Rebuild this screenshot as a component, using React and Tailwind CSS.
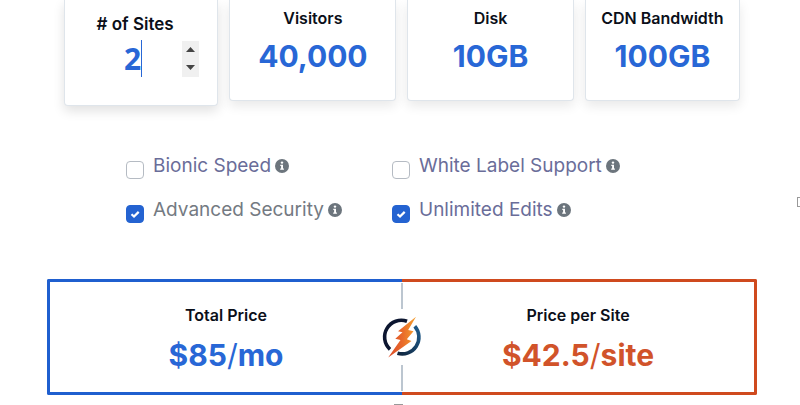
import React, { useState } from 'react';

const stats = [
  { label: 'Visitors', value: '40,000' },
  { label: 'Disk', value: '10GB' },
  { label: 'CDN Bandwidth', value: '100GB' },
];

const addons = [
  { id: 'speed', label: 'Bionic Speed', checked: false, color: 'text-[#6a6d99]' },
  { id: 'support', label: 'White Label Support', checked: false, color: 'text-[#6a6d99]' },
  { id: 'security', label: 'Advanced Security', checked: true, color: 'text-[#747a82]' },
  { id: 'edits', label: 'Unlimited Edits', checked: true, color: 'text-[#6a6d99]' },
];

function InfoIcon() {
  return (
    <svg viewBox="0 0 14 14" className="w-3.5 h-3.5 shrink-0" aria-hidden="true">
      <circle cx="7" cy="7" r="7" fill="#6c757d" />
      <circle cx="7" cy="3.6" r="1.2" fill="#fff" />
      <path d="M5.3 5.8H8v3.8h.9v1.2H5.2V9.6h.9V7h-.8z" fill="#fff" />
    </svg>
  );
}

function BoltLogo() {
  return (
    <svg viewBox="0 0 40 42" className="w-10 h-[42px]" aria-hidden="true">
      <defs>
        <linearGradient id="bolt" x1="0" y1="0" x2="1" y2="0">
          <stop offset="0" stopColor="#dc4b28" />
          <stop offset="0.5" stopColor="#e8692b" />
          <stop offset="1" stopColor="#f5a02c" />
        </linearGradient>
        <linearGradient id="ring" x1="0" y1="1" x2="1" y2="0">
          <stop offset="0" stopColor="#10243c" />
          <stop offset="1" stopColor="#1f5c8c" />
        </linearGradient>
      </defs>
      <path d="M25 5.3A16.7 16.7 0 0 0 8 33.3" fill="none" stroke="#0c1630" strokeWidth="3.6" />
      <path d="M32.800 10.200A16.700 16.700 0 0 1 15.500 37.200" fill="none" stroke="url(#ring)" strokeWidth="3.6" />
      <path d="M34 .8 16 15.300l4.500 1L13.300 22.700l5.200 1.300L6.200 41.500 29.500 25l-4.700-1.800L31.500 15.300l-5.300-1.300z" fill="url(#bolt)" />
    </svg>
  );
}

function StatCard({ label, value }) {
  return (
    <div className="h-[101px] pt-2 text-center bg-white border border-t-0 border-[#dfe5eb] rounded-b shadow-[0_5px_12px_rgba(0,0,0,0.09)]">
      <p className="text-base leading-5 font-semibold text-[#0b0f19]">{label}</p>
      <p className="mt-2 text-3xl leading-10 font-bold text-[#2867d6]">{value}</p>
    </div>
  );
}

function SitesCard({ sites, setSites }) {
  return (
    <div className="h-[106px] pt-[14px] px-[18px] text-center bg-white border border-t-0 border-[#dfe5eb] rounded-b shadow-[0_5px_12px_rgba(0,0,0,0.12)]">
      <label htmlFor="sites" className="block pr-3 text-[17px] leading-5 font-semibold text-[#0b0f19]"># of Sites</label>
      <div className="flex items-center mt-1.5">
        <div className="relative flex-1 min-w-0">
          <input
            id="sites"
            type="text"
            inputMode="numeric"
            value={sites}
            onChange={(e) => setSites(Number(e.target.value) || 0)}
            className="block w-full h-[37px] text-center text-3xl font-bold text-[#2867d6] font-['Noto_Sans',sans-serif] outline-none caret-transparent"
          />
          <span className="absolute top-0 left-1/2 ml-2 w-px h-[37px] bg-[#2867d6]" />
        </div>
        <div className="flex flex-col w-[17px] h-9 bg-[#f0f0f0]">
          <button type="button" aria-label="More sites" onClick={() => setSites(sites + 1)} className="flex-1 flex items-center justify-center">
            <svg viewBox="0 0 9 5" className="w-[9px] h-[5px]"><path d="M0 5 4.500 0 9 5z" fill="#444" /></svg>
          </button>
          <button type="button" aria-label="Fewer sites" onClick={() => setSites(Math.max(1, sites - 1))} className="flex-1 flex items-center justify-center">
            <svg viewBox="0 0 9 5" className="w-[9px] h-[5px]"><path d="M0 0 4.500 5 9 0z" fill="#444" /></svg>
          </button>
        </div>
      </div>
    </div>
  );
}

function Addon({ id, label, checked, color }) {
  return (
    <div className="flex h-11">
      <span className="relative w-[18px] h-[18px] mt-[7px] mr-[9px]">
        <input
          id={id}
          type="checkbox"
          defaultChecked={checked}
          className="peer block w-[18px] h-[18px] appearance-none bg-white border border-[#b5bbc3] rounded checked:bg-[#2463d1] checked:border-[#2463d1]"
        />
        <svg viewBox="0 0 18 18" className="absolute inset-0 hidden peer-checked:block pointer-events-none">
          <path d="m5.500 9.300 2.500 2.300 4.700-4.700" fill="none" stroke="#fff" strokeWidth="2.200" />
        </svg>
      </span>
      <label htmlFor={id} className={`flex items-center gap-1 h-6 text-[19px] leading-6 whitespace-nowrap ${color}`}>
        {label}
        <InfoIcon />
      </label>
    </div>
  );
}

function App() {
  const [sites, setSites] = useState(2);

  return (
    <div className="relative pl-[47px] pr-[43px] pb-2.5 bg-white font-[Inter,sans-serif]">
      <div className="grid grid-cols-[154fr_167fr_166fr_155fr] items-start gap-[11px] px-[17px]">
        <SitesCard sites={sites} setSites={setSites} />
        {stats.map(stat => <StatCard key={stat.label} {...stat} />)}
      </div>

      <div className="grid grid-cols-2 mt-12 pl-[79px] pr-[99px]">
        {addons.map(addon => <Addon key={addon.id} {...addon} />)}
      </div>

      <div className="relative grid grid-cols-2 mt-[37px] text-center">
        <div className="h-[116px] pt-[21px] border-3 border-r-0 border-[#1f5fcf] rounded-l-xs">
          <p className="text-base leading-6 font-semibold text-[#0b0f19]">Total Price</p>
          <p className="mt-2 text-3xl leading-10 font-bold text-[#2867d6]">$85<span className="font-normal">/</span>mo</p>
        </div>
        <div className="h-[116px] pt-[21px] border-3 border-l-0 border-[#cf4a1e] rounded-r-xs">
          <p className="text-base leading-6 font-semibold text-[#0b0f19]">Price per Site</p>
          <p className="mt-2 text-3xl leading-10 font-bold text-[#d1532a]">$42.5<span className="font-normal">/</span>site</p>
        </div>
        <div className="absolute inset-y-1 inset-x-0 flex flex-col items-center justify-between pointer-events-none">
          <span className="w-0.5 h-[26px] bg-[#bcc6d0]" />
          <BoltLogo />
          <span className="w-0.5 h-[26px] bg-[#bcc6d0]" />
        </div>
      </div>

      {/* resize handles of the surrounding frame */}
      <span className="absolute right-0 top-[197px] w-[3px] h-2.5 border border-r-0 border-[#999]" />
      <span className="absolute left-1/2 bottom-0 -ml-1.5 w-[9px] h-px bg-[#999]" />
    </div>
  );
}

export default App;
